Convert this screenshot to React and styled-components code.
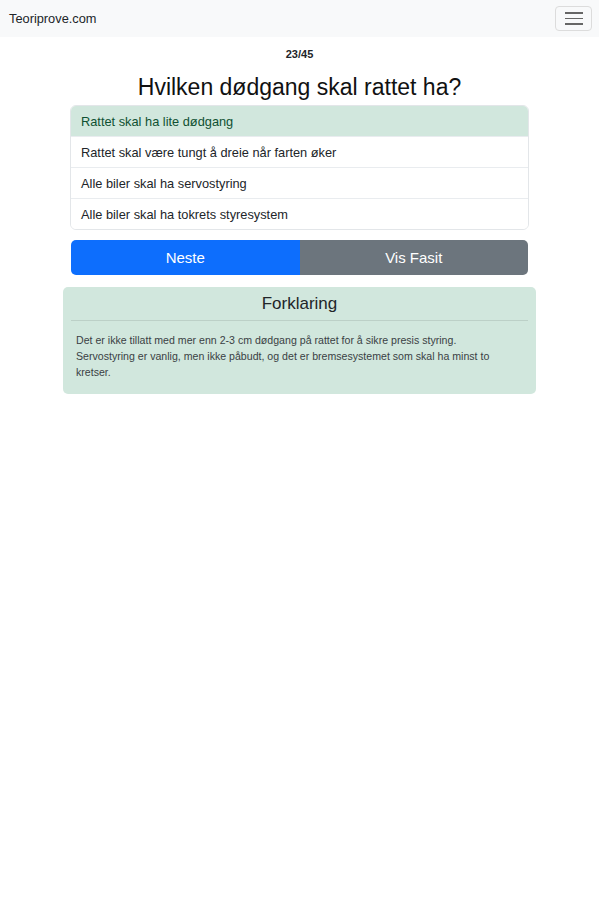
import React from 'react';
import styled, { createGlobalStyle } from 'styled-components';

const GlobalStyle = createGlobalStyle`
  body {
    margin: 0;
    background: #fff;
    font-family: "Liberation Sans", Arial, sans-serif;
    color: #212529;
  }
`;

const Navbar = styled.nav`
  height: 37px;
  background-color: #f8f9fa;
  display: flex;
  align-items: center;
  justify-content: space-between;
  padding: 0 7px 0 9px;
`;

const Brand = styled.span`
  font-size: 12.8px;
  color: #212529;
`;

const Toggler = styled.button`
  width: 37px;
  height: 25px;
  border: 1px solid #dcdcdc;
  border-radius: 4px;
  background: transparent;
  display: flex;
  flex-direction: column;
  justify-content: center;
  align-items: center;
  gap: 4px;
  padding: 0;
`;

const Bar = styled.span`
  width: 18px;
  height: 1.5px;
  background: #666;
`;

const Main = styled.main`
  display: flex;
  flex-direction: column;
  align-items: center;
  padding-top: 10px;
`;

const Counter = styled.div`
  font-size: 11px;
  font-weight: bold;
  color: #212529;
  line-height: 14px;
`;

const Title = styled.h1`
  font-size: 23px;
  font-weight: 400;
  margin: 12px 0 4px;
  line-height: 28px;
  color: #111;
`;

const ListGroup = styled.ul`
  list-style: none;
  margin: 0;
  padding: 0;
  width: 457px;
  border: 1px solid #e3e6e9;
  border-radius: 6px;
  overflow: hidden;
`;

const ListItem = styled.li`
  height: 30px;
  display: flex;
  align-items: center;
  padding: 0 10px;
  font-size: 12.8px;
  background: ${(p) => (p.$correct ? '#d1e7dd' : '#fff')};
  color: ${(p) => (p.$correct ? '#0f5132' : '#212529')};
  & + & {
    border-top: 1px solid #e9ecef;
  }
`;

const ButtonGroup = styled.div`
  display: flex;
  width: 457px;
  margin-top: 10px;
  border-radius: 5px;
  overflow: hidden;
`;

const Button = styled.button`
  flex: 1;
  height: 35px;
  border: none;
  font-family: inherit;
  font-size: 15px;
  color: #fff;
  background: ${(p) => (p.$variant === 'primary' ? '#0d6efd' : '#6c757d')};
`;

const Card = styled.section`
  width: 473px;
  margin-top: 12px;
  background: #d1e7dd;
  border-radius: 5px;
  padding: 0 8px 14px;
  box-sizing: border-box;
`;

const CardHeader = styled.h2`
  margin: 0;
  font-size: 17px;
  font-weight: 400;
  text-align: center;
  line-height: 33px;
  color: #212529;
  border-bottom: 1px solid #bcd0c7;
`;

const CardText = styled.p`
  margin: 11px 8px 0 5px;
  font-size: 10.6px;
  line-height: 16px;
  color: #3a3f44;
`;

const answers = [
  'Rattet skal ha lite dødgang',
  'Rattet skal være tungt å dreie når farten øker',
  'Alle biler skal ha servostyring',
  'Alle biler skal ha tokrets styresystem',
];

export default function App() {
  return (
    <>
      <GlobalStyle />
      <Navbar>
        <Brand>Teoriprove.com</Brand>
        <Toggler aria-label="Meny">
          <Bar />
          <Bar />
          <Bar />
        </Toggler>
      </Navbar>
      <Main>
        <Counter>23/45</Counter>
        <Title>Hvilken dødgang skal rattet ha?</Title>
        <ListGroup>
          {answers.map((a, i) => (
            <ListItem key={a} $correct={i === 0}>
              {a}
            </ListItem>
          ))}
        </ListGroup>
        <ButtonGroup>
          <Button $variant="primary">Neste</Button>
          <Button>Vis Fasit</Button>
        </ButtonGroup>
        <Card>
          <CardHeader>Forklaring</CardHeader>
          <CardText>
            Det er ikke tillatt med mer enn 2-3 cm dødgang på rattet for å sikre presis styring.
            <br />
            Servostyring er vanlig, men ikke påbudt, og det er bremsesystemet som skal ha minst to
            kretser.
          </CardText>
        </Card>
      </Main>
    </>
  );
}
